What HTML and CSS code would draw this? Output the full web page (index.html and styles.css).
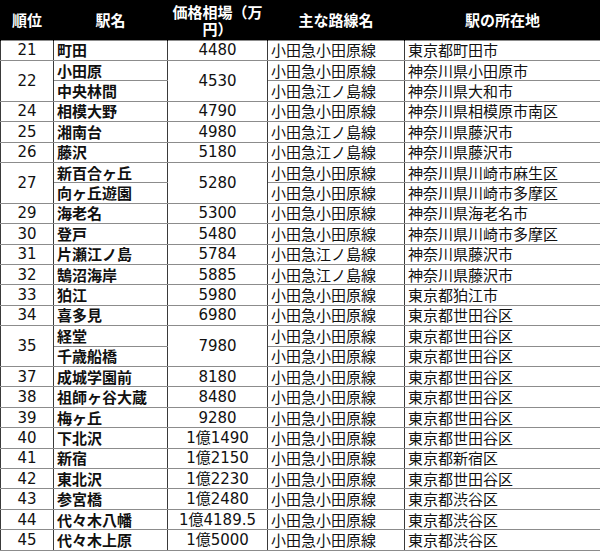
FILE: index.html
```html
<!DOCTYPE html>
<html lang="ja">
<head>
<meta charset="utf-8">
<link rel="stylesheet" href="styles.css">
</head>
<body>
<table class="rank">
<colgroup>
<col class="c-rank"><col class="c-name"><col class="c-price"><col class="c-line"><col class="c-loc">
</colgroup>
<thead>
<tr><th>順位</th><th>駅名</th><th>価格相場（万円）</th><th>主な路線名</th><th>駅の所在地</th></tr>
</thead>
<tbody>
<tr><td class="num">21</td><td class="st">町田</td><td class="num">4480</td><td>小田急小田原線</td><td>東京都町田市</td></tr>
<tr><td class="num" rowspan="2">22</td><td class="st">小田原</td><td class="num" rowspan="2">4530</td><td>小田急小田原線</td><td>神奈川県小田原市</td></tr>
<tr><td class="st">中央林間</td><td>小田急江ノ島線</td><td>神奈川県大和市</td></tr>
<tr><td class="num">24</td><td class="st">相模大野</td><td class="num">4790</td><td>小田急小田原線</td><td>神奈川県相模原市南区</td></tr>
<tr><td class="num">25</td><td class="st">湘南台</td><td class="num">4980</td><td>小田急江ノ島線</td><td>神奈川県藤沢市</td></tr>
<tr><td class="num">26</td><td class="st">藤沢</td><td class="num">5180</td><td>小田急江ノ島線</td><td>神奈川県藤沢市</td></tr>
<tr><td class="num" rowspan="2">27</td><td class="st">新百合ヶ丘</td><td class="num" rowspan="2">5280</td><td>小田急小田原線</td><td>神奈川県川崎市麻生区</td></tr>
<tr><td class="st">向ヶ丘遊園</td><td>小田急小田原線</td><td>神奈川県川崎市多摩区</td></tr>
<tr><td class="num">29</td><td class="st">海老名</td><td class="num">5300</td><td>小田急小田原線</td><td>神奈川県海老名市</td></tr>
<tr><td class="num">30</td><td class="st">登戸</td><td class="num">5480</td><td>小田急小田原線</td><td>神奈川県川崎市多摩区</td></tr>
<tr><td class="num">31</td><td class="st">片瀬江ノ島</td><td class="num">5784</td><td>小田急江ノ島線</td><td>神奈川県藤沢市</td></tr>
<tr><td class="num">32</td><td class="st">鵠沼海岸</td><td class="num">5885</td><td>小田急江ノ島線</td><td>神奈川県藤沢市</td></tr>
<tr><td class="num">33</td><td class="st">狛江</td><td class="num">5980</td><td>小田急小田原線</td><td>東京都狛江市</td></tr>
<tr><td class="num">34</td><td class="st">喜多見</td><td class="num">6980</td><td>小田急小田原線</td><td>東京都世田谷区</td></tr>
<tr><td class="num" rowspan="2">35</td><td class="st">経堂</td><td class="num" rowspan="2">7980</td><td>小田急小田原線</td><td>東京都世田谷区</td></tr>
<tr><td class="st">千歳船橋</td><td>小田急小田原線</td><td>東京都世田谷区</td></tr>
<tr><td class="num">37</td><td class="st">成城学園前</td><td class="num">8180</td><td>小田急小田原線</td><td>東京都世田谷区</td></tr>
<tr><td class="num">38</td><td class="st">祖師ヶ谷大蔵</td><td class="num">8480</td><td>小田急小田原線</td><td>東京都世田谷区</td></tr>
<tr><td class="num">39</td><td class="st">梅ヶ丘</td><td class="num">9280</td><td>小田急小田原線</td><td>東京都世田谷区</td></tr>
<tr><td class="num">40</td><td class="st">下北沢</td><td class="num">1億1490</td><td>小田急小田原線</td><td>東京都世田谷区</td></tr>
<tr><td class="num">41</td><td class="st">新宿</td><td class="num">1億2150</td><td>小田急小田原線</td><td>東京都新宿区</td></tr>
<tr><td class="num">42</td><td class="st">東北沢</td><td class="num">1億2230</td><td>小田急小田原線</td><td>東京都世田谷区</td></tr>
<tr><td class="num">43</td><td class="st">参宮橋</td><td class="num">1億2480</td><td>小田急小田原線</td><td>東京都渋谷区</td></tr>
<tr><td class="num">44</td><td class="st">代々木八幡</td><td class="num">1億4189.5</td><td>小田急小田原線</td><td>東京都渋谷区</td></tr>
<tr><td class="num">45</td><td class="st">代々木上原</td><td class="num">1億5000</td><td>小田急小田原線</td><td>東京都渋谷区</td></tr>
</tbody>
</table>
</body>
</html>
```
FILE: styles.css
```css
html, body {
  margin: 0;
  padding: 0;
  background: #fff;
}
.rank {
  width: 600px;
  height: 551px;
  border-collapse: collapse;
  table-layout: fixed;
  font-family: "DejaVu Sans", "Noto Sans CJK JP", sans-serif;
  font-size: 15px;
  color: #111;
}
.c-rank { width: 53px; }
.c-name { width: 114px; }
.c-price { width: 100px; }
.c-line { width: 137px; }
.c-loc { width: 196px; }

.rank thead tr { height: 40px; }
.rank th {
  background: #000;
  color: #fff;
  font-family: "Noto Sans CJK JP", sans-serif;
  font-weight: 700;
  font-size: 15px;
  line-height: 17px;
  padding: 0 3px;
  text-align: center;
  vertical-align: middle;
  border-left: 1px solid #000;
  border-right: 1px solid #000;
}
.rank td {
  padding: 0 3px;
  line-height: 18px;
  white-space: nowrap;
  overflow: hidden;
  text-align: left;
  vertical-align: middle;
  border-top: 1px solid #8c8c8c;
  border-bottom: 1px solid #8c8c8c;
  border-left: 1px solid #3a3a3a;
  border-right: 1px solid #3a3a3a;
  font-family: "Noto Sans CJK JP", sans-serif;
}
.rank td.num {
  text-align: center;
  font-family: "DejaVu Sans", "Noto Sans CJK JP", sans-serif;
  font-size: 15px;
}
.rank td.st {
  font-weight: 700;
}
```
